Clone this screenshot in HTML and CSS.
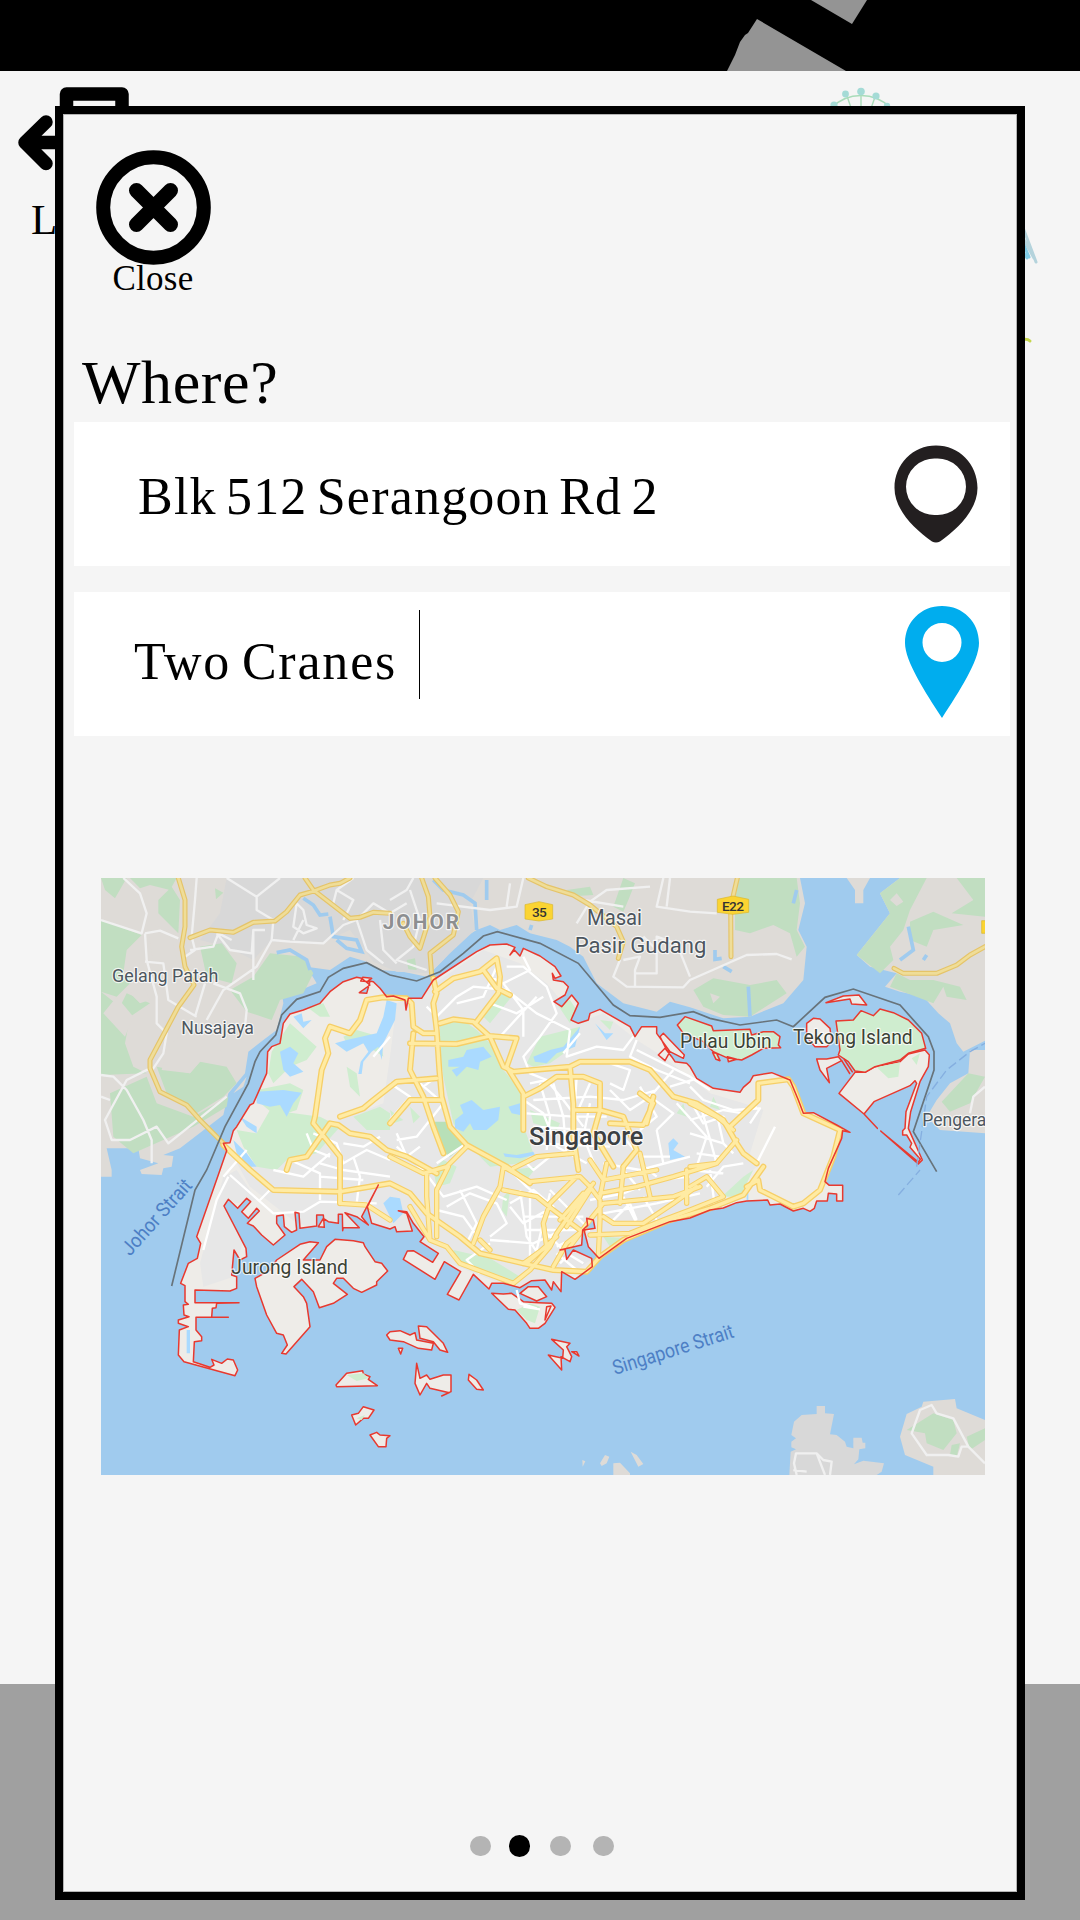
FILE: index.html
```html
<!DOCTYPE html>
<html lang="en">
<head>
<meta charset="utf-8">
<title>Where?</title>
<link rel="stylesheet" href="styles.css">
</head>
<body>
<div class="screen">
  <header class="topbar">
    <svg class="topbar-art" viewBox="0 0 1080 71" aria-hidden="true"><path d="M811 0 852 24 867 0ZM727 71 735 55 740 42 745 35 748 33 757 19 846 71Z"/></svg>
  </header>
  <main class="home">
    <svg class="home-art" viewBox="0 71 1080 330" aria-hidden="true">
      <g fill="none" stroke="#a9dcb9" stroke-width="1.4">
        <circle cx="861" cy="137" r="41.5"/>
        <path d="M861 92V137M847 96 861 137M875 97 861 137M834 105 861 137M887 106 861 137"/>
      </g>
      <g fill="#a5dbd6"><circle cx="845.5" cy="94" r="3.4"/><circle cx="861" cy="91.500" r="3.8"/><circle cx="876" cy="96" r="3.6"/><circle cx="834" cy="105" r="3.6"/><circle cx="887" cy="106" r="3.200"/></g>
      <g fill="none" stroke-linecap="round">
        <path stroke="#b4d3dc" stroke-width="3" d="M1022 225 1036 262M1024 240 1034 258"/>
        <path stroke="#7fcbe6" stroke-width="3" d="M1023 243 1029 257M1023 252 1027 258"/>
        <path stroke="#c5d64c" stroke-width="3" d="M1020 340Q1027 338 1030 341"/>
      </g>
      <g fill="none" stroke="#000" stroke-width="13.500" stroke-linecap="round" stroke-linejoin="round">
        <path d="M66.500 122V94H122V122"/>
        <path d="M46 122 25 142.500 46 163.500M28 142.500H90"/>
      </g>
    </svg>
    <span class="home-label">Log out</span>
  </main>
  <footer class="home-footer"></footer>

  <section class="modal">
    <button class="close" type="button">
      <svg viewBox="0 0 116 116" width="116" height="116" aria-hidden="true">
        <g fill="none" stroke="#000"><circle cx="58.500" cy="57.500" r="50.300" stroke-width="14"/><path d="M41.500 40.500 75.500 74.500M75.500 40.500 41.500 74.500" stroke-width="15" stroke-linecap="round"/></g>
      </svg>
      <span>Close</span>
    </button>
    <h1>Where?</h1>
    <div class="fields">
      <div class="field">
        <span class="value from">Blk 512 Serangoon Rd 2</span>
        <svg class="pin-from" viewBox="0 0 84 99" width="84" height="99" aria-hidden="true"><path fill="#231f20" fill-rule="evenodd" d="M42 0.500C65 0.500 83.500 19 83.500 43C83.500 64 65 83 46 96.500Q42 98.500 38 96.500C19 83 0.500 64 0.500 43C0.500 19 19 0.500 42 0.500ZM42 13.500A28.300 28.300 0 1 0 42 70A28.300 28.300 0 1 0 42 13.500Z"/></svg>
      </div>
      <div class="field">
        <span class="value to">Two Cranes</span><i class="caret"></i>
        <svg class="pin-to" viewBox="0 0 76 114" width="76" height="114" aria-hidden="true"><path fill="#00adee" fill-rule="evenodd" d="M38 2C59 2 75 18 75 39C75 57 55 88 38 114C21 88 1 57 1 39C1 18 17 2 38 2ZM38 19A19.500 19.500 0 1 0 38 58A19.500 19.500 0 1 0 38 19Z"/></svg>
      </div>
    </div>

    <svg class="map" viewBox="33 24 2652 1791" role="img" aria-label="Map of Singapore">
      <rect class="sea" x="33" y="24" width="2652" height="1791"/>
      <!-- Johor and Batam -->
      <g class="abroad">
        <path d="M33 24V920H65V900L50 835H145L150 865 205 880 150 900 155 912 215 915 220 895 245 890 250 858 220 855 270 835 400 735 415 670 465 610 475 545 520 510 560 480 580 400 572 340 610 370 680 340 650 290 720 300 780 260 830 275 870 300 940 305 1010 320 1060 270 1110 210 1160 180 1200 165 1230 180 1280 165 1320 190 1400 210 1440 230 1480 260 1520 340 1600 400 1700 425 1740 395 1800 412 1900 445 1980 440 2080 400 2140 330 2150 230 2125 180 2145 100 2130 24Z"/>
        <path d="M2430 24 2370 70 2400 130 2300 255 2340 290 2420 310 2385 350 2430 365 2500 380 2545 430 2580 460 2600 520 2620 545 2685 512V24ZM2270 24 2295 60V100H2320V60L2340 24ZM2685 540H2640L2635 610 2580 640 2540 690 2510 740 2550 780 2685 790Z"/>
        <path d="M2685 1650 2600 1615 2595 1587 2560 1590 2500 1595 2495 1610 2450 1632 2430 1700 2445 1755 2530 1790 2530 1815H2685ZM1530 1780 1545 1755 1558 1760 1550 1780 1535 1788ZM1570 1815V1780L1590 1778 1620 1810V1815ZM1622 1745 1640 1755 1660 1782 1645 1790ZM1477 1770 1486 1774 1478 1790Z"/>
      </g>
      <path class="town" d="M2098 1815 2102 1745 2118 1738 2104 1732V1715L2118 1705 2104 1695 2112 1655 2135 1635 2180 1632V1608H2205V1630L2232 1632 2220 1693 2240 1695 2265 1715 2270 1730 2290 1735V1703H2315L2318 1718H2326V1735L2308 1738 2305 1768 2292 1783 2320 1772 2382 1780 2375 1805 2360 1815Z"/>
      <path class="town" d="M410 24H1180L1140 100 1155 180 1080 250 1020 310 920 305 850 275 780 180 700 215 540 215 490 270 410 230 330 210 390 130Z"/>
      <g class="green">
        <path d="M33 24H110L75 85 45 60ZM120 24H260L240 60 180 45 150 55ZM205 90 245 50 270 90 265 190 205 130ZM33 150 90 170 155 195 110 240 100 310 130 330 80 380 33 365ZM33 365 90 410 110 370 180 400 120 440 105 520 130 590 170 610 33 615ZM375 55 400 68 378 88ZM330 230 395 220 440 280 425 340 350 320ZM540 250 640 260 670 310 640 370 570 390 545 450 470 425 420 360 490 320ZM200 590 300 610 330 575 410 590 440 640 400 680 320 730 265 690 230 670ZM60 670 170 620 200 700 310 740 415 680 410 710 310 770 130 850 70 800Z"/>
        <path d="M1935 24H2120L2130 100 2120 180 2145 230 2120 260 2100 190 2050 165 1980 190 1935 180ZM2430 24H2510L2460 120 2440 180 2400 230 2410 270 2370 310 2300 255 2400 130 2370 70ZM2460 155 2530 125 2620 165 2530 180 2510 230 2460 210ZM2600 24H2685V140L2585 130 2650 90ZM2420 310 2460 330 2530 330 2610 350 2630 390 2570 380 2560 350 2530 400 2400 350ZM1600 24 1635 40 1615 90 1600 125 1570 110ZM1430 60 1500 50 1510 75 1460 78ZM1810 360 1870 325 1980 345 2060 330 2090 370 1980 440 1900 435 1840 410ZM2635 610 2685 620 2640 700 2580 725 2555 695ZM950 270 975 265 980 300 955 298ZM2450 1680 2530 1630 2590 1650 2600 1690 2560 1740 2510 1720 2505 1690ZM2630 1700 2685 1675V1710L2640 1740ZM2585 1725 2610 1720 2600 1760 2580 1755Z"/>
      </g>
      <path class="farm" d="M170 160 240 180 260 270 230 300 190 280ZM40 430 80 380 130 440 105 500ZM230 540 310 450 380 470 400 580 330 575 300 610 215 600ZM430 670 470 620 460 650ZM2400 90 2420 70 2440 95 2420 108ZM1860 370 1890 380 1870 400ZM120 370 160 350 180 390 150 400Z"/>
      <g class="creek">
        <path d="M560 248 600 240 650 270 660 300M640 85 670 105 690 135 715 132M720 140 730 200 800 210 815 245 770 235 740 210M1030 30 1060 60 1120 75 1155 100 1160 180M1190 30 1190 90M1320 180 1325 165M1975 350 1980 440M2455 170 2470 240 2430 270M1875 240V268L1895 265M2510 255 2500 270M1900 290 1925 305M2120 60 2110 100"/>
      </g>

      <!-- Singapore: one coastline for the ground fill, the clip and the red outline -->
      <defs>
        <path id="coast" d="M890 380 870 355 850 335 835 332 845 325 818 322 812 333 840 335 830 370 808 368 840 345 815 325 800 322 760 335 720 365 690 400 640 420 600 432 580 460 570 520 545 530 533 545 530 610 490 700 480 705 440 770 430 782 420 818 400 820 410 842 390 900 320 1100 332 1120 322 1165 295 1180 272 1240 285 1247V1295L295 1303 280 1305 282 1335 297 1340 265 1350V1360L295 1370 268 1380 265 1455 282 1475 435 1517 443 1500 430 1470 412 1467 395 1480 365 1468 372 1485 360 1492 310 1475 313 1415 335 1412V1400L318 1380V1342H415 365L367 1315 378 1313 380 1300 447 1298H315V1260L420 1263 440 1255V1220L425 1215 432 1140 450 1170 470 1160 468 1135 402 1008 415 988 443 1015 470 985 482 995 455 1025 475 1045 500 1015 508 1023 472 1060 490 1068 515 1095 550 1125 585 1095 560 1060V1038L580 1035 583 1070 605 1087 620 1080 615 1027 627 1030 630 1075 680 1068V1035L700 1035 703 1072 685 1070 700 1045 715 1055 745 1060V1033L757 1033 758 1082 760 1073 808 1073 765 1028 800 1040 835 1065 815 1040 865 945 832 1010 845 1060 900 1077 915 1070 920 1085 967 1083 950 1030 925 1022 950 1025 970 1060 1002 1100 990 1115 1045 1150 1028 1177 970 1142 952 1143 940 1168 1035 1228 1063 1175 1112 1205 1072 1273 1107 1290 1150 1213 1197 1257 1205 1240 1240 1240 1290 1253 1325 1232 1365 1230 1385 1260 1390 1235 1413 1265 1415 1205 1455 1228 1507 1190 1505 1165 1450 1140 1430 1168 1425 1138 1410 1140 1475 1125 1478 1080 1493 1066 1490 1045 1510 1050 1515 1075 1482 1080 1495 1130 1527 1165 1610 1105 1740 1055 1800 1044 1860 1020 1900 1014 1940 998 1970 993 2033 990 2040 1005 2070 1002 2110 1023 2140 1015 2160 1024 2173 1015 2180 993H2212L2215 970 2240 972V993H2258V946H2218L2205 935 2215 895 2255 805 2258 782 2280 787 2240 765 2170 728 2140 730 2125 690 2100 630 2045 608 1990 617 1980 635 1960 652 1950 667 1870 655 1820 625 1800 590 1790 580 1755 575 1745 560 1725 535 1705 555 1725 572 1740 545 1780 565 1783 555 1720 490 1710 500 1730 540 1740 545 1700 490 1700 470 1655 470 1635 500 1620 470 1530 418 1500 430 1495 450 1465 460 1443 450 1465 400 1445 375 1415 410 1392 395 1425 375 1435 350 1420 335 1390 330 1387 310 1395 325 1413 318 1395 290 1350 258 1300 235 1290 258 1273 240 1260 255 1275 232 1250 222 1200 225 1160 245 1030 330 995 385H955L948 420 945 390 910 378Z"/>
        <clipPath id="on-land"><use href="#coast"/></clipPath>
      </defs>
      <use class="ground" href="#coast"/>
      <g clip-path="url(#on-land)">
      <path class="builtup" d="M920 400 1020 350 1180 240 1290 280 1370 340 1420 400 1460 460 1540 430 1640 510 1720 560 1860 670 1960 700 2020 720 1980 850 2000 890 1880 1000 1620 1090 1400 1240 1280 1260 1080 1180 920 1130 620 1060 480 950 430 860 520 880 600 870 650 790 880 700 900 560ZM400 920 440 900 500 990 440 1000 410 990 460 1110 430 1220 340 1250 330 1180Z"/>
      <g class="park">
        <path d="M600 460 680 530 650 570 600 590 550 640 535 610 545 545ZM650 410 700 400 720 440 690 440ZM760 500 800 480 870 500 880 560 820 520 770 520ZM500 660 600 640 640 660 620 720 560 740 500 690ZM440 780 500 790 540 720 690 740 750 770 680 850 590 870 560 900 500 890 460 830ZM770 590 800 610 810 680 780 650ZM790 740 870 710 900 730V780L830 780Z"/>
        <path d="M1050 460 1110 445 1160 480 1200 520 1240 600 1300 670 1305 780 1330 850 1290 880 1200 890 1130 820 1090 760 1060 620 1050 540ZM1170 430 1230 370 1265 380 1200 460ZM1400 400 1440 390 1460 420 1440 460ZM1310 580 1350 500 1470 470 1450 530 1380 580 1330 590ZM1530 450 1570 455 1560 480ZM900 720 940 750 910 760ZM960 710 990 740 970 760ZM1320 720 1410 760 1400 780 1330 760ZM1030 900 1060 870 1100 890 1080 940 1040 950ZM1260 900 1340 890 1310 930 1260 910ZM1090 1140 1200 1165 1290 1220 1260 1240 1100 1170ZM1240 980 1260 960 1250 1040 1235 1020ZM1540 1100 1610 1105 1560 1130ZM1895 980 1960 920 1990 900 1950 980ZM1870 680 1890 720 1860 710ZM1780 700 1790 740 1760 730Z"/>
      </g>
      <path class="reserve" d="M1030 755 1070 755 1130 820 1080 860 1050 840Z"/>
      <g class="lake">
        <path d="M500 665 580 660 635 668 610 700 590 740 570 705 540 710 500 700ZM570 545 600 530 625 550 610 580 640 605 600 620 580 600ZM610 440 635 430 640 455 665 450 640 475ZM450 740 500 770 500 790 470 770ZM430 810 470 850 500 890 480 890 440 850ZM890 390 920 400 915 450 895 490 880 520 875 570 865 530 845 545 820 575 815 612 805 612 812 575 835 545 820 520 770 545 735 520 770 510 860 490 880 440Z"/>
        <path d="M1075 570 1120 560 1130 540 1180 530 1205 560 1170 575 1165 600 1130 590 1100 620 1085 600 1110 590 1075 590ZM1095 750 1120 730 1110 705 1145 690 1180 720 1230 710 1225 750 1190 780 1150 780 1140 760 1120 785 1095 775ZM1255 710 1290 700 1290 735 1265 730ZM1240 850 1280 855 1330 845 1335 855 1290 865 1245 860ZM1330 560 1380 540 1420 530 1470 470 1455 530 1400 550 1370 580 1335 575ZM1515 460 1545 490 1570 490 1550 510ZM1735 820 1750 805 1765 820 1750 840 1785 860 1740 870ZM900 980 930 985 940 1030 910 1060 880 1000ZM1970 950H1975V990H1970ZM290 1380H300V1450H290Z"/>
      </g>
      </g>

      <!-- offshore islands -->
      <g class="island">
        <path d="M495 1225 500 1250 530 1335 560 1390 580 1395 592 1425 575 1450 588 1452 625 1410 660 1370 650 1300 640 1280 612 1250 635 1228 670 1265 688 1313 730 1300 772 1273 730 1240 740 1225 760 1225 790 1255 815 1267 860 1245 860 1235 893 1203 875 1180 855 1175 825 1130 820 1118 790 1112 735 1108 710 1130 690 1170 640 1170 685 1118 660 1115 630 1123 560 1170 540 1200Z"/>
        <path d="M1205 1270 1240 1272 1265 1270 1300 1295 1345 1298 1385 1300 1395 1312 1365 1360 1345 1375 1320 1375 1310 1360 1275 1320 1255 1318ZM1290 1270 1315 1250 1345 1250 1370 1280 1340 1293ZM1370 1310 1383 1308 1365 1350ZM900 1385 930 1382 960 1395 975 1388 980 1410 1030 1420 1025 1440 985 1435 940 1415 900 1410 890 1395ZM985 1368 1010 1370 1060 1420 1073 1447 1050 1440 1030 1415 990 1405ZM980 1480 990 1525 1010 1515 1020 1528 1060 1515 1083 1515 1083 1565 1055 1578 1078 1568 1020 1555 1010 1540 990 1575 975 1540ZM1137 1513 1160 1530 1180 1560 1160 1558 1135 1530ZM925 1435H938L932 1452ZM738 1545 770 1510 818 1502 820 1512 840 1520 835 1528 862 1547 740 1550ZM785 1635 805 1630 820 1610 852 1620 835 1645 820 1645 797 1665ZM840 1695 860 1687 870 1695 900 1697 890 1705 888 1730H865ZM1385 1408 1440 1420 1430 1430 1445 1460 1440 1475 1413 1460 1415 1500 1375 1455 1418 1465 1420 1440ZM1445 1445 1460 1445 1467 1458Z"/>
        <path class="green-island" d="M1762 465 1785 440 1865 468 1870 482 1980 478 1985 495 2020 485 2050 485 2070 500 2065 525 2072 533 2020 535 1985 555 1955 570 1910 563 1870 545 1840 515 1780 490ZM1868 548 1880 550 1890 572 1878 568ZM1912 560 1940 568 1915 575Z"/>
        <path d="M2208 398 2260 378 2307 375 2330 405 2285 402 2280 387 2260 390ZM2150 460 2170 445 2190 447 2220 475 2225 515 2210 530 2175 530 2150 500ZM2180 567H2210L2245 560 2255 572 2210 595 2218 638 2190 600Z"/>
        <path d="M2247 670 2295 607 2325 607 2355 590 2430 575 2455 552 2505 540 2518 555 2515 590 2490 635 2462 725 2455 775 2497 870 2485 882 2372 783 2485 876 2491 868 2460 832 2465 820 2450 795 2438 795 2438 782 2445 775 2448 725 2480 640 2475 632 2460 647 2352 695 2322 732 2362 775 2322 732Z"/>
        <path class="green-island" d="M2238 453 2290 450 2313 422 2350 437 2370 417 2410 428 2455 450 2495 490 2507 535 2455 550 2430 570 2355 590 2325 607 2295 603 2275 575 2245 555 2250 540Z"/>
        <path d="M2255 572 2280 612M2262 567 2288 607"/>
      </g>
      <path class="park" d="M2360 592 2430 577 2425 620 2395 625ZM1320 1300 1350 1310 1335 1360 1310 1350 1280 1320ZM770 1515 820 1510 835 1525 800 1533ZM800 1645 825 1635 815 1650ZM2465 565 2490 550 2480 585Z"/>

      <!-- streets -->
      <g class="lane">
        <path d="M100 24 150 70 170 130 155 190 33 150M165 190 210 182 265 205M165 190 170 270 200 380 200 460 230 490 220 550 180 610M320 24 315 90 305 200 315 240 285 260M165 275 220 280 235 390 320 440M350 450 400 360 500 290 545 210M370 340 450 370 470 420 465 470M315 440 345 340M33 615 70 620 110 660 160 750 185 810V880M180 595 110 630 45 750 65 810 120 810 200 770 235 820 410 680M33 680 60 690M410 24 500 80V120L550 150 545 210 600 215 700 220 760 165 800 150 830 240 880 280M500 80 570 24M380 190 420 240 485 250 490 180 525 180M490 180V330M300 240 370 230 385 190 425 210M620 100 640 120 650 165 680 175 640 190 610 170 620 100M730 100 740 60 790 90 760 150M740 60 790 24M640 150 610 210M800 150 850 100 900 130 950 100M870 150 880 240 920 280M900 90 950 60 970 24M960 60 990 150 970 230 920 270 1010 300M1040 100 1200 120 1280 110 1300 24M1250 110 1260 40M1460 160 1500 95 1550 60 1680 50M1480 90 1600 110M1590 270 1570 320 1610 350 1780 352 1800 330 1970 255 2060 252 2105 268M1600 270 1650 260 1635 300V350M1635 310H1700V200L1760 220 1800 320M1700 240 1660 200M1720 24 1700 110 1800 125 1880 130M1730 110 1740 24M2640 730 2650 680 2685 650M2120 1815 2112 1780 2118 1750H2180L2200 1770 2225 1775 2220 1815M2180 1750 2205 1815M2110 1800 2150 1805M2685 1780 2635 1730 2590 1645 2540 1630 2525 1605 2490 1620 2465 1690 2510 1755H2575L2605 1760 2615 1730H2635"/>
      </g>
      <g class="street" clip-path="url(#on-land)">
        <path d="M420 915 550 1030 640 1025 690 995 860 1000M415 920 380 990 340 1140M470 840 400 920M600 870 690 910V990M690 880 760 900 900 920M690 920 820 930M790 860 810 920 800 1000M510 990 540 960M650 790 670 840 720 860M670 790 740 820 760 880 830 840 900 870M760 820 820 830 870 800M900 500 850 560M720 850 640 920 550 900"/>
        <path d="M1010 410 1040 440 1100 380 1150 350 1250 360 1340 430 1440 480M1100 400 1180 380 1220 290M1180 310 1240 340 1320 300 1300 260M1250 290 1300 290 1370 350 1400 430 1350 500 1300 560 1320 610 1370 630M1200 400 1280 430 1360 380M1340 380 1230 500M1240 340 1300 420 1300 500M1440 480 1430 560 1520 530 1600 540 1630 500M1470 490 1420 550M1640 510 1620 560 1700 600 1800 640M1640 540 1800 620 1860 660M1560 580 1620 600 1600 660 1560 640M900 640 960 680 900 750M990 640 1060 700 980 800 920 810M1000 650 1040 620M920 790 950 860 990 830M1320 640 1370 630 1420 690 1480 770M1330 690 1500 680 1600 690 1700 660M1350 640 1380 740 1370 840M1310 730 1450 740 1550 740M1390 640 1420 740 1430 860M1330 770 1500 780M1340 820 1560 830M1300 690 1360 730 1400 830 1490 880M1460 620 1450 780M1500 640 1460 730M1560 660 1620 720 1680 680 1750 730 1700 780M1650 650 1700 740 1650 780M1750 600 1680 680M1740 650 1840 620"/>
        <path d="M1040 880 1130 820M920 830 1000 900 1060 980 1160 950 1250 990M1070 1010 1140 970 1220 1000 1250 1060 1200 1100M1040 1020 1120 1040 1170 1110M1110 960 1160 1060 1130 1120M1250 890 1310 950 1370 1000M1260 1000 1330 960 1390 1010 1300 1060 1260 1010M1290 960 1310 1100 1350 1160M1200 1110 1330 1120 1440 1070M1320 970V1160M1380 970 1340 1140M1300 1040 1480 1040M1310 1080 1500 1080M1360 1080 1440 1160M1380 960 1500 1080M1310 880 1330 900 1380 860M1500 990 1600 970 1700 930 1800 920M1560 1060 1620 1000 1640 1050M1600 980 1640 1060M1660 980 1700 1050M1540 1030 1700 1000 1830 970M1600 900 1650 960M1650 880 1700 920M1850 950 1900 890 1960 880M1800 900 1900 910M1880 1050 1860 900"/>
        <path d="M1200 1120 1130 1170 1170 1210M1400 1150 1460 1200M1430 1150 1480 1180M1410 1180 1450 1140M1400 1130 1440 1110M1800 650 1840 690 1930 720 2010 715 1980 760M1800 750 1900 720 1960 730 2000 710M1800 690 1840 760 1900 740 1930 790M1800 790 1900 820 1930 850M1820 850 1890 860M1880 730 1900 820M1830 700 1880 880M2055 770 2000 880M1500 700 1480 800 1520 900M1600 800 1650 860 1740 860M1700 780 1720 880M1540 880 1650 900 1800 860M1760 700 1850 800 1820 890"/>
      </g>
      <path class="street" d="M1280 1260 1290 1300 1340 1315M1300 1310 1350 1318"/>

      <!-- expressways: casing, then fill -->
      <defs>
        <path id="far-roads" d="M265 24 285 90V170L275 230 285 290 312 345 265 410 180 570V595L210 665 290 705 330 750 400 820M300 203 360 180 430 187 490 157 555 153 590 125 630 75 665 65 720 45 750 40 780 24M645 24 670 60 735 110 780 145 810 142 850 127 900 130M995 24 1015 80 1020 140 990 235 960 200 940 160M1035 24 1080 75 1105 125 1090 195 1020 250 1025 315M1315 24 1370 50 1450 75 1500 105 1580 170 1600 215 1585 265M1942 24 1922 110 1923 260M2412 295 2440 310H2540L2600 285 2640 255 2685 230"/>
        <path id="main-roads" d="M1030 325 1040 370 1030 400 1040 480 1048 600 1055 680 1080 770 1130 825 1250 890 1320 940M400 825 480 900 550 960 750 965 900 940 960 970 1010 1030 1110 1100 1170 1150 1300 1180 1390 1200 1490 1205 1530 1160 1600 1110 1740 1050 1860 1015 1960 975 2020 890M590 900 600 870 650 860 720 760 745 765 780 790 840 800 890 840 950 860 1040 910M750 740 820 715 850 690 920 635 1040 625M670 760 675 740 695 600 715 550 705 505 720 470 780 490 810 450 830 390 880 382 950 385 965 400 970 470 1000 490 1040 490M670 760 710 810 750 860 750 1000M1050 460 1090 448 1150 455 1200 500 1240 590 1270 605 1440 590 1470 575 1620 575 1680 600 1750 680 1820 700 1900 750 1940 820 1960 850 2000 880M970 490 960 600 1000 680 1030 770 1060 850M960 520 1100 522 1200 498 1280 505 1250 590 1300 670V780M900 760 960 690 1050 690M1035 365 1090 325 1170 305 1220 265 1230 320 1225 370 1160 455M1180 300 1220 355 1260 375M1440 590 1450 700 1450 800 1465 900M1300 680 1350 655 1400 620 1480 620 1530 640 1530 720 1510 790 1570 890M1455 720 1530 720 1600 740 1640 840 1600 890M1560 760 1660 765 1690 700 1650 670M1690 680 1670 760M1920 770 2005 690V640L2095 628 2110 650 2140 730 2250 780 2230 860 2190 960 2140 1000 2110 1010 2010 960 2005 930 1970 950"/>
        <path id="city-roads" d="M900 860 1000 910 1070 890 1130 830M750 965 750 1000 830 1005 900 1050M960 1010 990 1060 1020 1110 1070 1130 1110 1180 1270 1240 1320 1200 1380 1130 1400 1090 1470 990 1510 940M1010 910V980L1020 1110M1040 1100V960L1075 890M1150 1120 1180 1040 1230 950 1240 890 1320 935 1470 920 1500 950 1530 990V1050L1525 1160M1170 1110 1200 1140M1240 960 1340 980 1390 1020 1470 1080M1530 970 1640 950 1750 920 1880 880 1940 810M1500 1095 1620 1090 1720 1050 1800 1020 1900 980 1850 920 1800 950M1540 1040 1570 1060 1660 1060 1750 1000 1820 950M1460 920 1380 1000 1360 1060 1370 1130 1300 1180M1440 1130 1500 1050 1540 1000 1750 980 1830 950M1410 1050 1480 970M1430 1070 1500 960M1600 890 1590 1000M1550 880 1530 980M1650 850 1680 980M1500 870 1540 930 1700 900M1800 890 1880 880M1790 900V1000M1390 1190 1430 1120 1480 1080M1310 1180 1400 1100M1270 895 1340 860 1450 850M1800 700 1880 740 1930 780"/>
      </defs>
      <g class="casing"><use class="w-far" href="#far-roads"/><use class="w-main" href="#main-roads"/><use class="w-city" href="#city-roads"/></g>
      <g class="surface"><use class="w-far" href="#far-roads"/><use class="w-main" href="#main-roads"/><use class="w-city" href="#city-roads"/></g>
      <use class="outline" href="#coast"/>
      <path class="border" d="M245 1248 315 960 350 900 405 770 475 640 495 575 510 545 557 495 575 435 620 388 690 365 715 322 760 295 830 278 900 315 980 333 1050 305 1120 250 1180 198 1222 185 1350 220 1465 280 1570 405 1620 437 1710 442 1810 425 1860 445 1950 465 2060 450 2110 470 2205 382 2290 357 2430 405 2515 500 2532 545V600L2470 785 2540 905"/>
      <path class="ferry" d="M2425 975 2490 900M2480 890 2510 680 2570 600 2640 545 2685 520"/>

      <g class="badge"><path d="M1305 104 1347 95 1388 104V147L1347 153 1305 147ZM1882 88 1929 78 1976 88V127L1929 133 1882 127ZM2675 152H2690V190H2675Z"/><text x="1326" y="142" textLength="44">35</text><text x="1896" y="123" textLength="66">E22</text></g>
      <g class="place">
        <text class="s" x="66" y="336" textLength="319" lengthAdjust="spacingAndGlyphs">Gelang Patah</text>
        <text class="s" x="274" y="491" textLength="218" lengthAdjust="spacingAndGlyphs">Nusajaya</text>
        <text class="state" x="878" y="177" textLength="229">JOHOR</text>
        <text class="m" x="1491" y="164" textLength="165" lengthAdjust="spacingAndGlyphs">Masai</text>
        <text class="l" x="1454" y="249" textLength="395" lengthAdjust="spacingAndGlyphs">Pasir Gudang</text>
        <text class="city" x="1317" y="825" textLength="343" lengthAdjust="spacingAndGlyphs">Singapore</text>
        <text class="isle" x="1770" y="535" textLength="275" lengthAdjust="spacingAndGlyphs">Pulau Ubin</text>
        <text class="isle" x="2109" y="523" textLength="359" lengthAdjust="spacingAndGlyphs">Tekong Island</text>
        <text class="s" x="2497" y="768" textLength="192" lengthAdjust="spacingAndGlyphs">Pengera</text>
        <text class="isle" x="424" y="1211" textLength="350" lengthAdjust="spacingAndGlyphs">Jurong Island</text>
      </g>
      <g class="water">
        <text transform="translate(120 1160) rotate(-48)" textLength="284" lengthAdjust="spacingAndGlyphs">Johor Strait</text>
        <text transform="translate(1575 1515) rotate(-17.500)" textLength="378" lengthAdjust="spacingAndGlyphs">Singapore Strait</text>
      </g>
    </svg>

    <nav class="dots"><i></i><i class="on"></i><i></i><i></i></nav>
  </section>
</div>
</body>
</html>
```
FILE: styles.css
```css
* { box-sizing: border-box; }
body { margin: 0; font-family: "Liberation Serif", serif; color: #000; }

.screen {
  position: relative;
  width: 1080px;
  height: 1920px;
  overflow: hidden;
  display: flex;
  flex-direction: column;
  background: #f5f5f5;
}
.topbar { height: 71px; background: #000; }
.topbar-art { display: block; width: 1080px; height: 71px; fill: #949494; }
.home { position: relative; flex: 1; }
.home-art { display: block; width: 1080px; height: 330px; }
.home-label {
  position: absolute;
  left: 31px;
  top: 124px;
  font-size: 43px;
  line-height: 50px;
}
.home-footer { height: 236px; background: #a0a0a0; }

/* dialog over the home screen */
.modal {
  position: absolute;
  left: 55px;
  top: 106px;
  width: 970px;
  height: 1794px;
  border: 8px solid #000;
  background: #f5f5f5;
  box-shadow: inset 0 0 0 1px #b4b4b4;
  display: flex;
  flex-direction: column;
  align-items: flex-start;
}
.close {
  margin: 36px 0 0 32px;
  width: 116px;
  padding: 0;
  border: 0;
  background: none;
  display: flex;
  flex-direction: column;
  align-items: center;
  font: 35px/40px "Liberation Serif", serif;
  letter-spacing: 0.3px;
  color: #000;
}
.close svg { display: block; }
.close span { margin-top: -7px; }
h1 {
  margin: 48px 0 0 19px;
  font-size: 62px;
  line-height: 70px;
  font-weight: 400;
  letter-spacing: 0.6px;
}
.fields {
  margin: 5px 0 0 11px;
  width: 936px;
  display: flex;
  flex-direction: column;
  gap: 26px;
}
.field {
  height: 144px;
  background: #fff;
  display: flex;
  align-items: flex-start;
}
.value { font-size: 52px; line-height: 60px; white-space: nowrap; }
.from { margin: 45px 0 0 64px; letter-spacing: 1.2px; word-spacing: -5px; }
.to { margin: 40px 0 0 60px; letter-spacing: 1.8px; word-spacing: -4px; }
.caret { width: 1px; height: 89px; margin: 18px 0 0 22px; background: #000; }
.pin-from { margin: 23px 32px 0 auto; }
.pin-to { margin: 12px 30px 0 auto; }

.map {
  display: block;
  width: 884px;
  height: 597px;
  margin: 142px 0 0 38px;
  font-family: Roboto, sans-serif;
}
.sea { fill: #a0cbee; }
.abroad { fill: #dedbd7; }
.town { fill: #d8d8d8; }
.farm { fill: #dedbd7; }
.green { fill: #c1dec1; }
.creek { fill: none; stroke: #a0cbee; stroke-width: 11; }
.ground { fill: #eeece8; }
.outline { fill: none; stroke: #e8392f; stroke-width: 4.5; stroke-linejoin: round; }
.island { fill: #eeece8; stroke: #e8392f; stroke-width: 4.5; stroke-linejoin: round; }
.green-island { fill: #cfedcf; }
.builtup { fill: #e7e7e7; }
.park { fill: #cfedcf; }
.reserve { fill: #b8e0b8; }
.lake { fill: #aadaff; }
.lane { fill: none; stroke: #f0f0f0; stroke-width: 7; stroke-linejoin: round; }
.street { fill: none; stroke: #fff; stroke-width: 7; stroke-linejoin: round; }
.casing, .surface { fill: none; stroke-linejoin: round; stroke-linecap: round; }
.casing { stroke: #f6cf68; }
.surface { stroke: #ffeba3; }
.casing .w-far { stroke: #e5c469; stroke-width: 15; }
.surface .w-far { stroke: #efdd98; stroke-width: 8; }
.casing .w-main { stroke-width: 18; }
.surface .w-main { stroke-width: 10; }
.casing .w-city { stroke-width: 16; }
.surface .w-city { stroke-width: 10; }
.border { fill: none; stroke: #68737a; stroke-width: 5; }
.ferry { fill: none; stroke: #85afe0; stroke-width: 4; stroke-dasharray: 28 12; }
.badge path { fill: #fbd432; stroke: #d9b62c; stroke-width: 2; }
.badge text { font-size: 41px; fill: #333; font-weight: 500; }
.place text {
  fill: #4d565f;
  stroke: #fff;
  stroke-opacity: 0.75;
  stroke-width: 7;
  paint-order: stroke;
  stroke-linejoin: round;
}
.place .s { font-size: 57px; }
.place .m { font-size: 64px; }
.place .l { font-size: 68px; }
.place .state { font-size: 62px; font-weight: 700; fill: #8d8f91; }
.place .city { font-size: 77px; font-weight: 500; fill: #3c4043; }
.place .isle { font-size: 61px; fill: #3c4236; }
.water text { font-size: 60px; fill: #4d7fc5; }

.dots {
  margin: 360px 0 0 407px;
  display: flex;
  align-items: center;
  gap: 20px;
}
.dots i { width: 20.5px; height: 20.5px; border-radius: 50%; background: #b4b4b4; }
.dots i.on { width: 21.5px; height: 21.5px; background: #000; margin: 0 0 0 -2px; }
.dots i:last-child { margin-left: 2.5px; }
```
